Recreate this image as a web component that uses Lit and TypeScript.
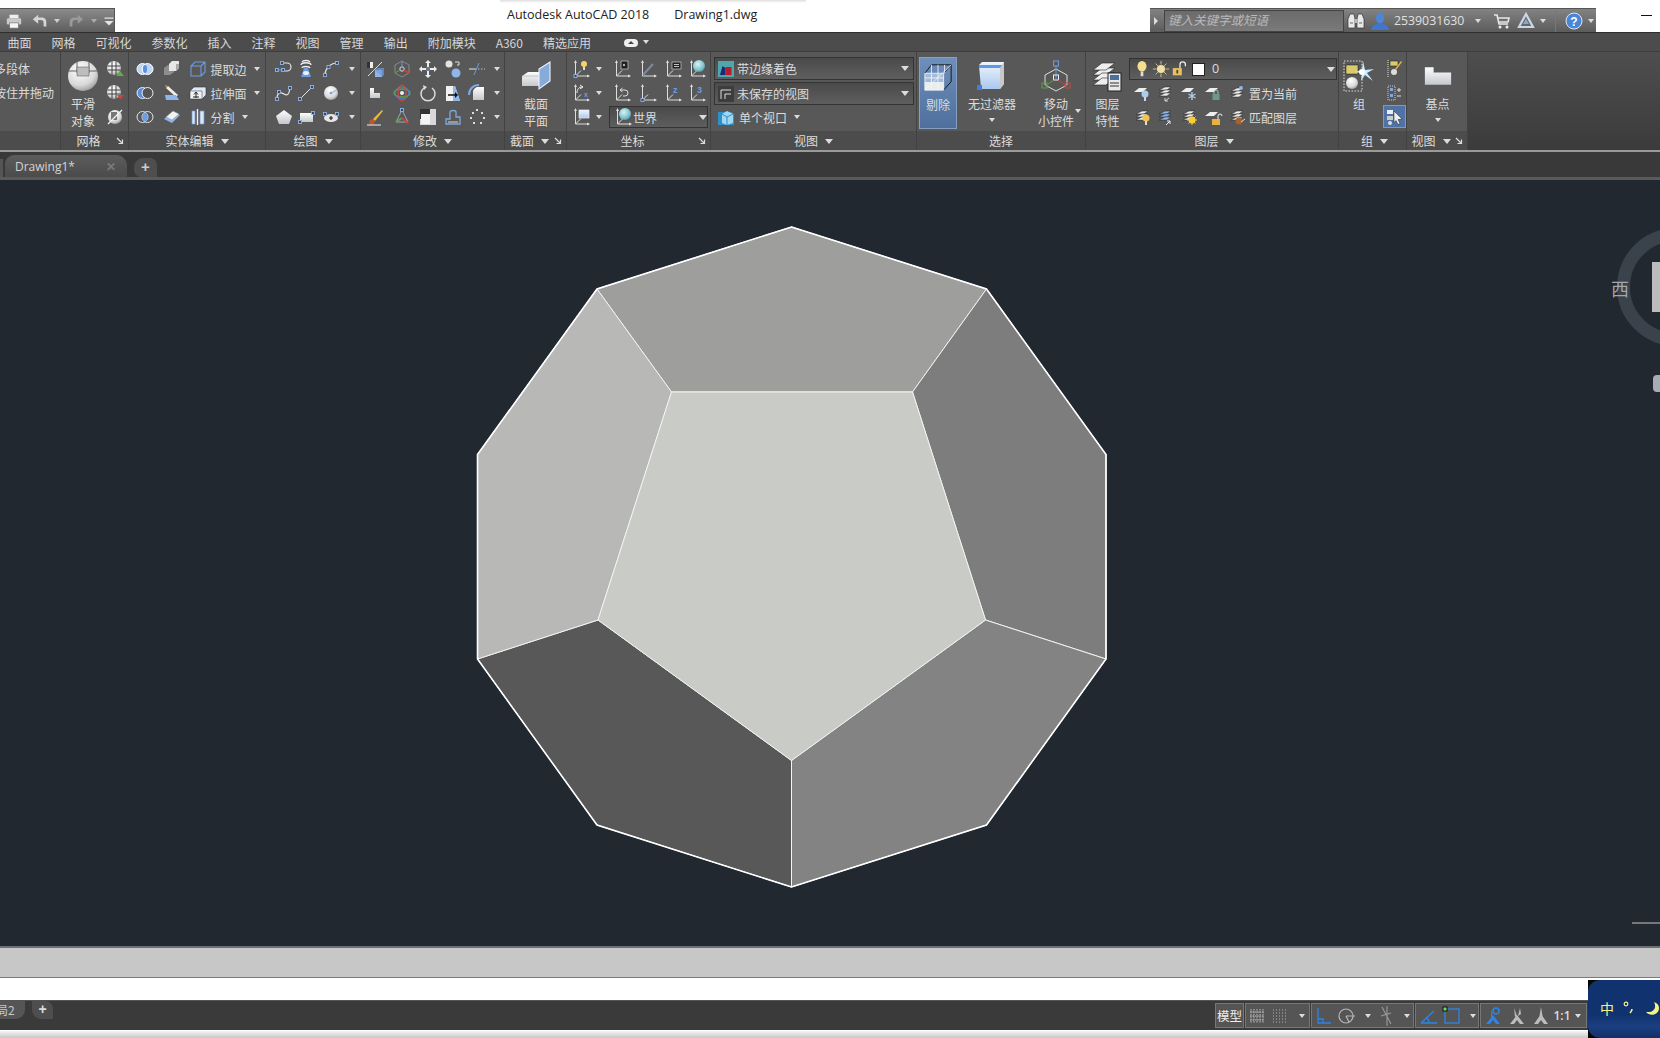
import { LitElement, html, css, svg, nothing } from "lit";
import { customElement } from "lit/decorators.js";

const WHITE = "#e6e6e6";
const BLUE = "#6c9be0";

const node = (x: number, y: number, c = "#8fb4e6") =>
  svg`<rect x=${x - 1.5} y=${y - 1.5} width="3" height="3" fill="#3f4650" stroke=${c} stroke-width=".9"/>`;

const ucs = (extra: unknown = nothing) => svg`
  <path d="M4.5 2v15H18M4.5 17l5.5-5.5" fill="none" stroke="#ddd"/>
  <path d="M3 4l1.5-3L6 4zM16 15.5l3 1.5-3 1.5z" fill="#ddd"/>${extra}`;

const meshBall = (extra: unknown = nothing) => svg`
  <circle cx="9" cy="9" r="7" fill="url(#ball)"/>
  <path d="M2.5 7h13M2.5 11h13M7 2.3v13.4M11 2.3v13.4" stroke="#333" stroke-width=".9"/>${extra}`;

const stack = (y = 0, c = "#eee") => svg`
  <path d=${`M4 ${y + 7}l6-3h6l-4 3z`} fill=${c} stroke="#222" stroke-width=".5"/>
  <path d=${`M4 ${y + 10}l6-3h6l-4 3z`} fill=${c} stroke="#222" stroke-width=".5"/>
  <path d=${`M4 ${y + 13}l6-3h6l-4 3z`} fill=${c} stroke="#222" stroke-width=".5"/>`;

const flatLayer = svg`<path d="M2 9l5-4h8l-4 4z" fill="#eee"/>`;

const ICONS: Record<string, unknown> = {
  printer: svg`<path d="M5 3h10v4H5z" fill="#eee"/><rect x="2" y="7" width="16" height="7" rx="1.5" fill="#c9c9c9"/><path d="M5 12h10v6H5z" fill="#f4f4f4" stroke="#555" stroke-width=".6"/>`,
  undo: svg`<path d="M2 8l6-5v3h4c4 0 5 3 5 5v5h-3v-4c0-2-1-3-3-3H8v4z" fill="#d5d5d5"/>`,
  redo: svg`<path d="M18 8l-6-5v3H8c-4 0-5 3-5 5v5h3v-4c0-2 1-3 3-3h3v4z" fill="#9a9a9a"/>`,
  qatmore: svg`<path d="M5 6h10v1.6H5zM5 10h10l-5 5z" fill="#e4e4e4"/>`,
  binoculars: svg`<path d="M2 8l2-5h4l1 5v9H2zM11 8l1-5h4l2 5v9h-7z" fill="#e8e8e8" stroke="#333" stroke-width=".7"/><path d="M9 8h2v4H9z" fill="#bbb"/><path d="M4 12h3M13 12h3" stroke="#666"/>`,
  user: svg`<ellipse cx="10" cy="7" rx="4" ry="5.5" fill="#4d86d8"/><path d="M1 19c1-5 4-6 9-6s8 1 9 6z" fill="#3e77cc"/>`,
  cart: svg`<path d="M2 4h3l2 9h9M6 7h11l-1 4H7" fill="none" stroke="#e6e6e6" stroke-width="1.6"/><circle cx="8" cy="16" r="1.5" fill="#eee"/><circle cx="15" cy="16" r="1.5" fill="#eee"/>`,
  a360: svg`<path d="M10 3l7 13H3z" fill="none" stroke="#c9d7ea" stroke-width="2.2"/><path d="M10 8l3 5H7z" fill="#8aa7cc"/>`,
  help: svg`<circle cx="10" cy="10" r="8" fill="#4a86d8" stroke="#dce8f7"/><text x="10" y="14.5" text-anchor="middle" font-family="Liberation Sans" font-weight="700" font-size="12" fill="#fff">?</text>`,
  view3d: svg`<rect x="1" y="5" width="14" height="8" rx="4" fill="#eee"/><path d="M5 10l3-3 3 3z" fill="#444"/>`,

  sphere: svg`<circle cx="16" cy="16" r="15" fill="url(#ball)"/><path d="M2 11h28M10 2v11M22 2v11" stroke="#555" stroke-width=".9"/><path d="M10 7h12v9H10z" fill="#bdbdbd" stroke="#666" stroke-width=".6"/>`,
  meshUp: svg`${meshBall()}<path d="M11 17l4-5 4 5z" fill="#5fae3f"/>`,
  meshDown: svg`${meshBall()}<path d="M12 12h7l-3.5 4.5z" fill="#c9463d"/>`,
  meshSlash: svg`<circle cx="10" cy="10" r="7" fill="url(#ball)"/><path d="M6 5h6v8H6z" fill="#777"/><path d="M3 17L17 3" stroke="#f2f2f2" stroke-width="1.3"/>`,

  union: svg`<circle cx="7.5" cy="10" r="5.5" fill="#bcd4f5" stroke="#fff"/><circle cx="12.5" cy="10" r="5.5" fill="#bcd4f5" stroke="#fff"/><ellipse cx="10" cy="10" rx="2" ry="4" fill="#5d8fd8"/>`,
  subtract: svg`<circle cx="7.5" cy="10" r="5.5" fill="#5d8fd8" stroke="#e8eef6"/><circle cx="12.5" cy="10" r="5.5" fill="#555" stroke="#e8eef6"/>`,
  intersect: svg`<circle cx="7.5" cy="10" r="5.5" fill="none" stroke="#dfe4ea"/><circle cx="12.5" cy="10" r="5.5" fill="none" stroke="#dfe4ea"/><ellipse cx="10" cy="10" rx="2.6" ry="4.6" fill="#6f9ee0"/>`,
  cubes: svg`<path d="M2 9l4-3h6v7l-4 3H2z" fill="#8d8d8d"/><path d="M7 5l3-3h7v7l-3 3H7z" fill="#e7e7e7"/><path d="M14 5h3v4l-3 3z" fill="#aaa"/>`,
  edgeCube: svg`<path d="M3 7h10v10H3zM3 7l4-4h10v10l-4 4M13 7l4-4" fill="none" stroke=${BLUE} stroke-width="1.1"/>`,
  pressPull: svg`<path d="M6 3l10 9-2 2L4 5z" fill="#eee"/><path d="M3 2l3 1-2 2z" fill="#d28a38"/><path d="M3 12h11l3 5H4z" fill="#8fb6ea"/>`,
  extrude: svg`<path d="M2 8l4-4h12v8l-4 4H2z" fill="#dfe9f5" stroke="#333" stroke-width=".6"/><path d="M2 8h12v8H2z" fill="#f2f2f2" stroke="#456" stroke-width=".6"/><path d="M8 15V10M6 11.5L8 9l2 2.5M5 14h6" stroke="#222" fill="none"/>`,
  shell: svg`<path d="M2 12l8-7 8 3-8 8z" fill="#8fb6ea"/><path d="M4 10l7-6 6 3-7 6z" fill="#f2f2f2" stroke="#888" stroke-width=".5"/>`,
  slice: svg`<path d="M4 4h3v13H4zM12 4h4v13h-4z" fill="#dbe6f4" stroke="#6c9be0" stroke-width=".7"/><path d="M9.5 2v16" stroke="#f2f2f2" stroke-width="1.4"/>`,

  pline: svg`${node(3, 11)}${node(9, 11)}<path d="M3 11h6" stroke=${BLUE}/><path d="M9 4h4a4 4 0 0 1 0 8h-2" fill="none" stroke=${WHITE} stroke-width="1.2"/>${node(8, 4)}`,
  helix: svg`<path d="M5 18l3-9h4l3 9z" fill="#6c9be0"/><ellipse cx="10" cy="14" rx="3" ry="2" fill="#e8f0fb"/><path d="M6 9c0-2 7-2 8 0M5 6c0-3 10-3 10 0M6 3c1-2 7-2 8 0" fill="none" stroke="#eee" stroke-width="1.3"/>`,
  arc3: svg`<path d="M4 16C4 10 9 4 16 4" fill="none" stroke=${WHITE} stroke-width="1.2"/>${node(4, 16)}${node(7.5, 8)}${node(16, 4)}`,
  spline: svg`<path d="M3 16c0-7 4-7 7-5s5 1 6-6" fill="none" stroke=${WHITE} stroke-width="1.2"/>${node(3, 16)}${node(16, 5)}${node(5, 9)}`,
  line: svg`<path d="M4 16L16 4" stroke=${WHITE}/>${node(4, 16)}${node(16, 4)}`,
  circle: svg`<circle cx="10" cy="10" r="7" fill="url(#ball)"/><circle cx="10" cy="10" r="1.3" fill="#6c9be0"/><path d="M10 10l6-3" stroke="#8fb4e6"/>`,
  pentagon: svg`<path d="M10 3l8 6-3 8H5L2 9z" fill="url(#whitegrad)"/>`,
  rect: svg`<path d="M4 6h13v9H4z" fill="url(#whitegrad)"/>${node(4, 15)}${node(17, 6)}`,
  teapot: svg`<ellipse cx="10" cy="11" rx="7" ry="4" fill=${WHITE}/><path d="M8 11h4M10 9v4" stroke="#222" stroke-width="1.2"/>${node(4, 7)}${node(16, 7)}`,

  scale: svg`<path d="M3 17L17 3" stroke="#ddd"/><path d="M2 3h6v6H2z" fill="#eee"/><path d="M2 3h3v6H2z" fill="#333"/><path d="M10 11h7v7h-7z" fill="#8fb6ea"/><path d="M10 11l2-2h7v7l-2 2z" fill="#6c9be0" opacity=".7"/>`,
  move3d: svg`<path d="M10 2l7 4v8l-7 4-7-4V6z" fill="none" stroke="#8a8a8a"/><circle cx="10" cy="10" r="2.2" fill="none" stroke="#ddd"/><path d="M10 2v6" stroke=${BLUE}/><path d="M3 14l5-3" stroke="#5d9f48"/><path d="M17 14l-5-3" stroke="#c9463d" stroke-width="1.6"/>`,
  move: svg`<path d="M10 1l3 3h-2v5h5V7l3 3-3 3v-2h-5v5h2l-3 3-3-3h2v-5H4v2l-3-3 3-3v2h5V4H7z" fill="#eee"/><rect x="8" y="8" width="4" height="4" fill="#6c7a8c"/>`,
  copy: svg`<circle cx="6" cy="5" r="3.5" fill="#e3e3e3"/><circle cx="13" cy="14" r="4.5" fill="#8fb6ea"/><path d="M12 3h4v3M14 6l2 0" stroke="#ddd" fill="none"/>`,
  trim: svg`<path d="M2 10h7" stroke=${WHITE}/><path d="M11 10h7" stroke="#bbb" stroke-dasharray="1.5 1.5"/><path d="M7 16L12 4" stroke=${BLUE}/>`,
  ell: svg`<path d="M5 5h4v5h6v5H5z" fill="url(#whitegrad)"/>`,
  rotate3d: svg`<ellipse cx="10" cy="10" rx="8" ry="4" fill="none" stroke="#5d9f48" stroke-width="1.4"/><ellipse cx="10" cy="10" rx="4" ry="8" fill="none" stroke="#c9463d" stroke-width="1.4"/><ellipse cx="10" cy="10" rx="7" ry="6" fill="none" stroke="#4d86d8"/><circle cx="10" cy="10" r="2" fill="#eee"/>`,
  rotate: svg`<path d="M6 5a7 7 0 1 0 8 0" fill="none" stroke="#ddd" stroke-width="1.5"/><path d="M5 2l4 2-3 3z" fill="#ddd"/>`,
  stretch: svg`<path d="M3 3h9l5 15H3z" fill="#f1f1f1"/><path d="M12 3l5 15h-7V3z" fill="#8fb6ea"/><path d="M5 12h8" stroke="#111" stroke-width="1.5"/><path d="M12 9l3 3-3 3z" fill="#111"/>`,
  fillet: svg`<path d="M6 17V9c0-3 3-5 5-5h6v13z" fill="url(#whitegrad)"/><path d="M2 12c0-6 4-10 10-10" fill="none" stroke="#7fa8de" stroke-width="2"/>`,
  brush: svg`<path d="M8 12L17 3l1 1-8 10z" fill="#eab93b"/><path d="M5 13l3-1 2 2-1 3-5 1z" fill="#c1552d"/><path d="M2 18h14" stroke="#eee"/>`,
  triad: svg`<path d="M10 3L4 15h12z" fill="none" stroke="#99a9bf"/><path d="M4 15l6-4" stroke="#5d9f48" stroke-width="2"/><path d="M16 16l-6-5" stroke="#c9463d" stroke-width="2"/>${node(10, 3)}`,
  offset: svg`<path d="M2 2h16v16H2z" fill="#d9d9d9"/><path d="M2 2h10v10H2z" fill="#333"/><path d="M3 7h9v10H3z" fill="#f4f4f4"/>`,
  boundary: svg`<path d="M3 17v-5h4V5c0-2 6-2 6 0v5h4v7z" fill="none" stroke="#7fa8de" stroke-width="1.3"/><path d="M5 15h10" stroke="#ddd"/>`,
  array: svg`<g fill="#ddd"><rect x="9" y="2" width="2" height="2"/><rect x="14" y="5" width="2" height="2"/><rect x="16" y="10" width="2" height="2"/><rect x="13" y="15" width="2" height="2"/><rect x="6" y="15" width="2" height="2"/><rect x="3" y="10" width="2" height="2"/><rect x="5" y="5" width="2" height="2"/></g>`,

  section: svg`<path d="M1 15l6-4h14l-2 4v10H1z" fill="url(#whitegrad)"/><path d="M1 15h18v10" fill="none" stroke="#999" stroke-width=".5"/><path d="M18 8l11-7v19l-11 8z" fill="#87abd9" stroke="#eef" stroke-width="1.1"/>`,

  ucsLamp: svg`${ucs()}<circle cx="13" cy="5" r="3" fill="#f5d36a"/><rect x="12" y="8" width="2" height="3" fill="#ddd"/>${node(4.5, 17)}`,
  ucsDoc: svg`${ucs()}<rect x="9" y="2" width="7" height="8" fill="#222" stroke="#ccc" stroke-width=".7"/><path d="M11 5l2 2m0-2l-2 2" stroke="#eee" stroke-width=".7"/>`,
  ucsPlain: svg`<path d="M4.5 2v15H18" fill="none" stroke="#ddd"/><path d="M3 4l1.5-3L6 4zM16 15.5l3 1.5-3 1.5z" fill="#ddd"/><path d="M5 16L15 5" stroke="#7b8aa0" stroke-width="2"/>`,
  ucsList: svg`${ucs()}<rect x="9" y="3" width="9" height="7" fill="#222" stroke="#ccc" stroke-width=".7"/><path d="M11 5.5h5M11 7.5h5" stroke="#eee" stroke-width=".8"/>`,
  ucsGlobe: svg`${ucs()}<circle cx="12" cy="7" r="6" fill="url(#globe)"/>`,
  ucsX: svg`${ucs()}<path d="M6 10c0-4 2-6 5-6M9 2l3 2-3 2" fill="none" stroke="#eee"/><text x="13" y="14" font-size="7" font-weight="700" font-family="Liberation Sans" fill=${BLUE}>x</text>`,
  ucsUndo: svg`${ucs()}<path d="M8 7h5a3 3 0 0 1 0 6h-2M8 7l2.5-2M8 7l2.5 2" fill="none" stroke="#ddd"/>`,
  ucsNode: svg`${ucs()}${node(4.5, 17)}`,
  ucsZ: svg`${ucs()}<text x="10" y="10" font-size="9" font-weight="700" font-family="Liberation Sans" fill=${BLUE}>z</text>`,
  ucs3: svg`${ucs()}<text x="10" y="10" font-size="9" font-weight="700" font-family="Liberation Sans" fill=${BLUE}>3</text>`,
  ucsFace: svg`${ucs()}<rect x="8" y="3" width="10" height="8" fill="url(#bluegrad)" stroke="#eee" stroke-width=".7"/>`,

  shade: svg`<rect x="0" y="0" width="16" height="16" fill="#4ea7ab"/><path d="M2 14l2.5-9 3 2v7z" fill="#162b77"/><path d="M7.5 6h6v8H8z" fill="#b81c2a"/>`,
  viewDark: svg`<rect x="0" y="0" width="16" height="16" fill="#3d3d3d"/><path d="M3 13V4h10M7 13V8h6" fill="none" stroke="#ddd"/>`,
  viewport: svg`<path d="M1 4h13l3 2v11H1z" fill="#2f8fc8"/><path d="M5 6l5-3 6 3v9l-6 2-5-2z" fill="#9fd8f2"/><path d="M10 9v8M5 6l5 3 6-3" stroke="#2f8fc8" fill="none"/>`,

  hide: svg`<path d="M2 12h20v18H2z" fill="#cfdff2" opacity=".6"/><path d="M2 22h20v8H2z" fill="#ececec"/><path d="M2 12l7-9h21v18l-8 9M22 12l8-9" fill="none" stroke="#111"/><path d="M2 12h20v18H2zM9 12v18M16 12v18M2 17h20M2 22h20M2 30L30 3M9 3v9M16 3v9M23 3v9" fill="none" stroke="#f2f6fb" stroke-width=".9"/>`,
  filterCube: svg`<path d="M3 5l3-3h22v22l-4 5H5z" fill="url(#bluegrad)"/><path d="M3 5h23v3H3z" fill="#5a9be8"/><path d="M24 8l4-6v22l-4 5z" fill="#c8c8c8"/><rect x="1" y="25" width="5" height="5" fill="#3f7fe0"/>`,
  gizmo: svg`<path d="M16 9l11 6v10l-11 6-11-6V15z" fill="none" stroke="#ddd"/><path d="M16 5v14" stroke=${BLUE}/><rect x="13.5" y="1" width="5" height="5" fill="none" stroke=${BLUE}/><rect x="13.5" y="15" width="5" height="5" fill="none" stroke="#eee"/><path d="M5 26l9-6" stroke="#5d9f48"/><rect x="2" y="23" width="5" height="5" fill="none" stroke="#5d9f48"/><path d="M27 26l-9-6" stroke="#c9463d"/><rect x="25" y="23" width="5" height="5" fill="none" stroke="#c9463d"/>`,
  layerProps: svg`<path d="M1 15L10 8h13l-9 7z" fill="#eee" stroke="#222" stroke-width=".6"/><path d="M1 20l9-7h13l-9 7z" fill="#eee" stroke="#222" stroke-width=".6"/><path d="M1 25l9-7h13l-9 7z" fill="#eee" stroke="#222" stroke-width=".6"/><path d="M1 10L10 3h13l-9 7z" fill="#eee" stroke="#222" stroke-width=".6"/><rect x="16" y="13" width="13" height="18" fill="#e8e8e8" stroke="#222"/><path d="M18 15h9v5h-9z" fill="#4d6f9e"/><path d="M18 23h9M18 26h9" stroke="#333"/>`,
  group: svg`<rect x="1" y="1" width="18" height="30" fill="none" stroke="#ddd" stroke-dasharray="1.5 1.5"/><rect x="3" y="5" width="12" height="9" fill="#dccb6b" stroke="#111" stroke-width=".5"/><circle cx="9" cy="23" r="6" fill="url(#ball)"/><path d="M20 1l2 9 9-1-7 4 6 8-8-6-4 6 1-8-7-1 7-2z" fill="#c5ecff"/><circle cx="19" cy="12" r="3" fill="#fff"/>`,
  baseShape: svg`<path d="M1 6h10v6h20v14H1z" fill="url(#whitegrad)"/>`,

  groupEdit: svg`<path d="M6 2h8v5H6z" fill="#dccb6b" stroke="#111" stroke-width=".5"/><circle cx="10" cy="13" r="3" fill="#ddd"/><path d="M4 1v17" stroke="#ddd" stroke-dasharray="1 1"/><path d="M11 10l6-8 1 1-6 8z" fill="#eab93b"/>`,
  groupAdd: svg`<rect x="4" y="3" width="7" height="14" fill="none" stroke="#ccc" stroke-dasharray="1 1"/><rect x="6" y="5" width="3" height="3" fill="#7fa8de"/><rect x="6" y="11" width="3" height="3" fill="#7fa8de"/><path d="M13 7h4M15 5v4M13 13h4" stroke="#ddd"/>`,
  groupPick: svg`<rect x="3" y="3" width="6" height="4" fill="#eee"/><rect x="3" y="9" width="6" height="4" fill="#ccc"/><circle cx="6" cy="16" r="2" fill="#ddd"/><path d="M10 4l8 8-4 .6 2 4-2 1-2-4-2 2z" fill="#eee" stroke="#222" stroke-width=".5"/>`,

  bulb: svg`<ellipse cx="10" cy="7" rx="5" ry="6" fill="#f5e08e"/><rect x="8.5" y="13" width="3" height="5" fill="#ddd"/>`,
  sun: svg`<circle cx="10" cy="10" r="4.5" fill="#f1dfa5"/><path d="M10 1v4M10 15v4M1 10h4M15 10h4M4 4l2.5 2.5M13.5 13.5L16 16M16 4l-2.5 2.5M6.5 13.5L4 16" stroke="#d8c999"/>`,
  lockOpen: svg`<rect x="2" y="9" width="10" height="8" fill="#e9c25e"/><rect x="6" y="11" width="2" height="4" fill="#444"/><path d="M10 9V5a3 3 0 0 1 6 0v2" fill="none" stroke="#eee" stroke-width="1.4"/>`,

  layOff: svg`${flatLayer}<circle cx="13" cy="11" r="3.5" fill="#a9cdea"/><rect x="12" y="14" width="2" height="4" fill="#dce"/>`,
  layIso: svg`${stack()}<path d="M14 15l-4 3M10 15v3h3" stroke="#ddd" fill="none" stroke-width=".9"/>`,
  layFreeze: svg`${flatLayer}<path d="M13 9v8M9.5 11l7 4M16.5 11l-7 4" stroke="#a9cdea" stroke-width="1.4"/>`,
  layLock: svg`${flatLayer}<rect x="9.5" y="11" width="7" height="6" fill="#6c9a86"/><path d="M11 11V9a2 2 0 0 1 4 0v2" fill="none" stroke="#9fc4b2"/>`,
  layCur: svg`${stack(1)}<circle cx="14" cy="5" r="2" fill="#8fb6ea"/>`,
  layOn: svg`${stack()}<circle cx="14" cy="11" r="3.5" fill="#f5c24a"/><rect x="13" y="14" width="2" height="4" fill="#ddd"/>`,
  layUniso: svg`${stack(0, "#8fb6ea")}<path d="M11 18l4-4M12 14h3v3" stroke="#eee" fill="none"/>`,
  layThaw: svg`${stack()}<circle cx="13" cy="13" r="3.5" fill="#f5cd3f"/><path d="M13 8v10M8 13h10M9.5 9.5l7 7M16.5 9.5l-7 7" stroke="#f5cd3f"/>`,
  layUnlock: svg`${flatLayer}<rect x="9" y="12" width="8" height="6" fill="#e9b23e"/><path d="M15 12V9a2 2 0 0 1 4 0" fill="none" stroke="#eee"/>`,
  layMatch: svg`${stack()}<circle cx="12" cy="14" r="3.5" fill="#a8602c"/><path d="M14 15l4-3" stroke="#ddd"/>`,

  stGrid: svg`<path d="M3 3v14M6 3v14M9 3v14M12 3v14M15 3v14M2 6h14M2 10h14M2 14h14" stroke="#b8b8b8" stroke-dasharray="1.6 .8"/>`,
  stSnap: svg`<path d="M2 4h15M2 7h15M2 10h15M2 13h15M2 16h15" stroke="#b0b0b0" stroke-dasharray="1 2"/>`,
  stOrtho: svg`<path d="M4 2v15h13M4 13h5v4" fill="none" stroke="#2e84e6" stroke-width="1.3"/>`,
  stPolar: svg`<circle cx="9" cy="10" r="7" fill="none" stroke="#b8b8b8" stroke-width="1.2"/><path d="M9 10h9M9 10l3 6" stroke="#b8b8b8" stroke-width="1.2"/>`,
  stIso: svg`<path d="M14 18L5 1M10 0v20M4 10l10-3" stroke="#9a9a9a" stroke-width="1.1"/>`,
  stAngle: svg`<path d="M2 17h16M2 17L15 5M10 17c0-3-1-4-2-5" fill="none" stroke="#2e84e6" stroke-width="1.4"/>`,
  stBox: svg`<rect x="3" y="3" width="14" height="14" fill="none" stroke="#2e84e6" stroke-width="1.3"/><rect x="1" y="1" width="4" height="4" fill="#6ee06a" stroke="#111"/>`,
  stAnnoBlue: svg`<path d="M10 9L3 18h4l3-4 3 4h4z" fill="#2e84e6"/><path d="M8 3L10 11l-2 1z" fill="#2e84e6"/><circle cx="13" cy="5" r="3" fill="none" stroke="#2e84e6" stroke-width="1.5"/>`,
  stAnnoGrey: svg`<path d="M10 9L3 18h4l3-4 3 4h4z" fill="#bdbdbd"/><path d="M7 2l3 8-2 1zM13 2l-2 8 3-2z" fill="#bdbdbd"/>`,
  stAnno: svg`<path d="M10 8L3 18h4l3-4 3 4h4z" fill="#bdbdbd"/><path d="M10 1l1.5 9h-3z" fill="#bdbdbd"/>`,
};

function ic(name: string, size = 20, box = 20) {
  return html`<svg class="ic" width=${size} height=${size} viewBox="0 0 ${box} ${box}">${ICONS[name]}</svg>`;
}

// grid columns from the icon centres read off the screen, tracks end half a gap past the last centre
function tracks(panelX: number, centers: number[], tail = "") {
  const mids = centers.slice(1).map((c, i) => (c + centers[i]) / 2);
  const start = centers[0] - (mids[0] - centers[0]);
  const end = centers[centers.length - 1] + (centers[centers.length - 1] - mids[mids.length - 1]);
  const edges = [start, ...mids, end];
  const cols = edges.slice(1).map((e, i) => `${e - edges[i]}px`).join(" ");
  return `padding-left:${start - panelX}px;grid-template-columns:${cols} ${tail}`;
}

type Row = string[];

function cell(c: string) {
  if (c === "^") return html`<i class="caret"></i>`;
  if (c.startsWith("t:")) return html`<span class="lbl">${c.slice(2)}<i class="caret"></i></span>`;
  if (c.startsWith("p:")) return html`<span class="lbl">${c.slice(2)}</span>`;
  return ic(c);
}

function grid(panelX: number, centers: number[], rows: Row[], tail = "") {
  return html`<div class="grid" style=${tracks(panelX, centers, tail)}>${rows.map((r) => r.map(cell))}</div>`;
}

const launcher = html`<svg class="launch" width="8" height="8" viewBox="0 0 8 8"><path d="M1 1l5 5M6.5 2.5v4h-4" fill="none" stroke="#ddd" stroke-width="1.2"/></svg>`;

function title(text: string, caret = true, launch = false, nudge = false) {
  return html`<div class="title ${launch || nudge ? "nudge" : ""}"><span class="tt">${text}${caret ? html`<i class="caret wide"></i>` : nothing}</span>${launch ? launcher : nothing}</div>`;
}

const TABS = ["曲面", "网格", "可视化", "参数化", "插入", "注释", "视图", "管理", "输出", "附加模块", "A360", "精选应用"];

@customElement("app-root")
export class AppRoot extends LitElement {
  static styles = css`
    :host {
      display: flex;
      flex-direction: column;
      width: 1660px;
      height: 1038px;
      overflow: hidden;
      position: relative;
      background: #fff;
      font-family: "Noto Sans CJK SC", "Liberation Sans", sans-serif;
      font-size: 12px;
      color: #dcdcdc;
    }
    .ic { display: block; flex: none; }
    .defs { width: 0; height: 0; position: absolute; }
    .caret {
      display: inline-block;
      width: 0;
      height: 0;
      border-left: 3px solid transparent;
      border-right: 3px solid transparent;
      border-top: 4px solid #dcdcdc;
      flex: none;
    }
    .caret.wide { border-left-width: 4px; border-right-width: 4px; border-top-width: 5px; margin-left: 7px; vertical-align: 2px; }

    .topbar { height: 32px; display: flex; align-items: flex-end; background: #fff; position: relative; flex: none; }
    .topbar::before {
      content: "";
      position: absolute;
      left: 500px;
      top: 0;
      width: 306px;
      height: 3px;
      background: linear-gradient(#dedede, #fff);
    }
    .qat {
      width: 115px;
      height: 24px;
      box-sizing: border-box;
      border: 1px solid #555;
      border-bottom: 0;
      border-left: 0;
      background: linear-gradient(#8a8a8a, #5e5e5e);
      display: flex;
      align-items: center;
      padding-left: 5px;
      flex: none;
    }
    .qat .ic { width: 18px; height: 18px; }
    .qat .spacer { width: 8px; flex: none; }
    .qat .caret { margin: 0 7px 0 5px; border-top-color: #cfcfcf; }
    .qat .caret.dim { border-top-color: #aaa; margin: 0 3px 0 6px; }
    .doc-title {
      margin-left: 392px;
      align-self: flex-start;
      margin-top: 6px;
      line-height: 18px;
      font-family: "Open Sans", "Noto Sans CJK SC", sans-serif;
      font-size: 12.5px;
      color: #222;
      display: flex;
      gap: 25px;
      width: 643px;
      flex: none;
      white-space: nowrap;
    }
    .cluster {
      width: 446px;
      height: 24px;
      flex: none;
      box-sizing: border-box;
      border-top: 1px solid #555;
      background: linear-gradient(#828282, #5c5c5c);
      display: flex;
      align-items: center;
    }
    .cluster .tri {
      width: 0;
      height: 0;
      margin-left: 4px;
      border-top: 4px solid transparent;
      border-bottom: 4px solid transparent;
      border-left: 4px solid #ddd;
    }
    .search {
      margin-left: 6px;
      width: 180px;
      height: 22px;
      box-sizing: border-box;
      border: 1px solid #444;
      background: linear-gradient(#6b6b6b, #7a7a7a);
      color: #b9b9b9;
      font-style: italic;
      font-size: 12.5px;
      line-height: 17px;
      padding-left: 3px;
    }
    .cluster .bino { margin-left: 2px; }
    .cluster .usr { margin-left: 4px; }
    .cluster .num {
      margin-left: 4px;
      width: 81px;
      font-family: "Open Sans", sans-serif;
      font-size: 12.3px;
      color: #e0e0e0;
    }
    .cluster .cart { margin-left: 11px; }
    .cluster .tri360 { margin-left: 4px; }
    .cluster .sep { width: 1px; height: 22px; background: #777; margin: 0 8px 0 9px; }
    .cluster .sm { margin-left: 4px; }
    .close { margin-left: 45px; width: 11px; height: 1px; background: #111; align-self: flex-start; margin-top: 15px; flex: none; }

    .tabs {
      height: 20px;
      box-sizing: border-box;
      flex: none;
      border-top: 1px solid #2e2e2e;
      border-bottom: 1px solid #3d3d3d;
      background: #4c4c4c;
      display: flex;
      align-items: center;
      gap: 20px;
      padding-left: 7.5px;
      color: #d6d6d6;
      white-space: nowrap;
    }
    .tabs .switch { display: flex; align-items: center; gap: 4px; margin-left: 12px; }

    .ribbon {
      height: 100px;
      flex: none;
      box-sizing: border-box;
      display: flex;
      background: linear-gradient(#4e4e4e, #3b3b3b);
      border-bottom: 2px solid #9a9a9a;
    }
    .panel {
      flex: none;
      display: flex;
      flex-direction: column;
      overflow: hidden;
      box-sizing: border-box;
      border-right: 1px solid #424242;
      background: #585858;
    }
    .body { height: 79px; box-sizing: border-box; padding-top: 5px; display: flex; }
    .title {
      height: 19px;
      display: flex;
      align-items: center;
      background: #4c4c4c;
      line-height: 19px;
      color: #dcdcdc;
    }
    .title.nudge .tt { padding-left: 4px; }
    .tt { flex: 1; text-align: center; white-space: nowrap; }
    .launch { flex: none; margin: 0 4px 0 4px; }

    .grid { display: grid; grid-auto-rows: 24px; align-items: center; justify-items: center; }
    .lbl { justify-self: start; white-space: nowrap; display: flex; align-items: center; gap: 7px; }

    .large { flex: none; display: flex; flex-direction: column; align-items: center; text-align: center; line-height: 17px; position: relative; white-space: nowrap; }
    .large .pic { height: 38px; display: flex; align-items: center; justify-content: center; }
    .w-mesh { width: 44px; }
    .w-sec { width: 62px; }
    .w-hide { width: 38px; height: 72px; margin-left: 2px; box-sizing: border-box; border: 1px solid #86a0c4; background: linear-gradient(#6e8fbb, #4f6f9c); }
    .w-filter { width: 70px; }
    .w-gizmo { width: 58px; }
    .w-layer { width: 43px; }
    .w-group { width: 38px; margin-left: 1px; }
    .w-base { width: 61px; }
    .large .under { margin-top: 6px; }
    .large .gizmo-more { position: absolute; right: 4px; top: 52px; }

    .clip { display: flex; flex-direction: column; margin-left: -6px; line-height: 24px; white-space: nowrap; }

    .combo {
      box-sizing: border-box;
      height: 23px;
      border: 1px solid #333;
      background: linear-gradient(#4a4a4a, #5e5e5e);
      display: flex;
      align-items: center;
      white-space: nowrap;
    }
    .combo > span { margin-top: -1px; }
    .combo .caret { margin-left: auto; border-left-width: 4px; border-right-width: 4px; border-top-width: 5px; margin-right: 4px; }
    .combo.world { grid-column: 3 / -1; justify-self: start; width: 99px; height: 22px; }
    .combo.world > span { margin-top: 0; }
    .combo.world .ic { margin-left: 3px; }
    .combo.world .caret { margin-right: 0; }
    .view-col { display: flex; flex-direction: column; gap: 2px; padding-left: 3px; width: 200px; }
    .view-col .combo { padding-left: 3px; gap: 3px; }
    .view-row { display: flex; align-items: center; height: 20px; padding-left: 3px; gap: 4px; }
    .view-row .caret { margin-left: 3px; }

    .layer-col { display: flex; flex-direction: column; }
    .combo.layer { width: 208px; height: 22px; margin: 1px 0 1px; }
    .combo.layer .zero { margin-left: 7px; font-family: "Open Sans", sans-serif; font-size: 12.5px; }
    .combo.layer .caret { margin-right: 1px; }
    .swatch { width: 13px; height: 13px; background: #fff; border: 1px solid #222; box-sizing: border-box; }
    .combo.layer .ic { width: 18px; height: 18px; }
    .combo.layer .bulb { margin-left: 3px; margin-top: 0; }
    .combo.layer .gap { margin-left: 1px; margin-top: 0; }
    .combo.layer .swatch { margin-left: 3px; margin-top: 0; }

    .group-col { display: flex; flex-direction: column; align-items: center; width: 24px; margin-left: 4px; }
    .group-col .slot { height: 24px; width: 23px; display: flex; align-items: center; justify-content: center; box-sizing: border-box; }
    .group-col .slot.on { background: #4f73a6; border: 1px solid #7c9ac6; height: 23px; }

    .filetabs {
      height: 25px;
      flex: none;
      background: #393939;
      display: flex;
      align-items: flex-end;
      position: relative;
      padding-left: 5px;
    }
    .filetabs .shard { position: absolute; left: 0; bottom: 0; width: 3px; height: 18px; background: #555; }
    .ftab {
      width: 122px;
      height: 22px;
      box-sizing: border-box;
      padding: 0 11px 0 10px;
      border-radius: 9px 11px 0 0;
      background: linear-gradient(#5c5c5c, #4b4b4b);
      display: flex;
      align-items: center;
      justify-content: space-between;
      font-family: "Open Sans", sans-serif;
      font-size: 12px;
      color: #d4d4d4;
    }
    .ftab .x { color: #7a7a7a; font-size: 12px; font-weight: 700; }
    .fplus {
      margin-left: 7px;
      width: 23px;
      height: 19px;
      border-radius: 9px 7px 0 7px;
      background: #4e4e4e;
      color: #ccc;
      font: 700 15px/18px "Liberation Sans", sans-serif;
      text-align: center;
    }
    .strip { height: 3px; flex: none; background: #5a5a5a; }

    .canvas { height: 766px; flex: none; position: relative; background: #212830; overflow: hidden; }
    .canvas > svg.scene { display: block; }
    .cube-west { position: absolute; left: 1611px; top: 96px; font-size: 18px; line-height: 24px; color: #a3a6aa; }
    .wcs { position: absolute; left: 1653px; top: 195px; width: 12px; height: 17px; border-radius: 4px; background: #a9acb2; }

    .cmd-edge { height: 2px; flex: none; background: #6b6f74; }
    .cmd { height: 30px; flex: none; box-sizing: border-box; background: #c8c7c8; border-bottom: 1px solid #7b7b7b; }
    .cmd-white { height: 22px; flex: none; background: #fff; }

    .status {
      height: 30px;
      flex: none;
      background: #3a3a3a;
      border-top: 1px solid #555;
      box-sizing: border-box;
      display: flex;
      position: relative;
      justify-content: flex-end;
      padding: 2px 73px 2px 0;
      gap: 1px;
    }
    .ltab {
      position: absolute;
      left: 0;
      top: 0;
      width: 25px;
      height: 18px;
      overflow: hidden;
      background: #555;
      border-radius: 0 0 9px 0;
      font-size: 12px;
      line-height: 18px;
      color: #c8c8c8;
    }
    .ltab span { display: block; margin-left: -16px; white-space: nowrap; }
    .lplus {
      position: absolute;
      left: 32px;
      top: 0;
      width: 21px;
      height: 18px;
      background: #4e4e4e;
      border-radius: 0 8px 0 9px;
      color: #ddd;
      font: 700 14px/17px "Liberation Sans", sans-serif;
      text-align: center;
    }
    .sgroup {
      box-sizing: border-box;
      height: 25px;
      border: 1px solid #777;
      background: #555;
      display: grid;
      align-items: center;
      justify-items: center;
    }
    .sgroup .ic { width: 20px; height: 20px; }
    .sgroup .txt { font-size: 12.5px; color: #eee; white-space: nowrap; }
    .sgroup .scale { font-family: "Open Sans", sans-serif; font-size: 12px; color: #ddd; font-weight: 600; }
    .model { width: 29px; }
    .foot { flex: 1; background: linear-gradient(#f4f4f4, #c8c8c8); border-top: 1px solid #fff; }

    .ime {
      position: absolute;
      left: 1588px;
      top: 980px;
      width: 72px;
      height: 58px;
      background: #050505;
    }
    .ime-in {
      height: 100%;
      box-sizing: border-box;
      border-radius: 12px 0 0 12px;
      background: linear-gradient(#10336f 60%, #1b3f82 80%, #142f66);
      display: flex;
      align-items: flex-start;
      padding: 17px 0 0 12px;
      gap: 7px;
      color: #f4f48a;
      font-size: 14px;
      line-height: 22px;
    }
    .ime-in .ic { width: 16px; height: 16px; margin-top: 3px; }
  `;

  private scene() {
    const A = "791.5,227", B = "986.5,289", C = "1106,454.5", D = "1106,659", E = "986.5,825";
    const F = "791.5,887", G = "597,825", H = "477.5,659", I = "477.5,454.5", J = "597,289";
    const P = "671.5,392", Q = "912.5,392", R = "985.5,620", S = "791.5,760.5", T = "598,620";
    const faces: [string, string][] = [
      [`${J} ${A} ${B} ${Q} ${P}`, "#9e9e9d"],
      [`${B} ${C} ${D} ${R} ${Q}`, "#7d7d7d"],
      [`${R} ${D} ${E} ${F} ${S}`, "#838383"],
      [`${T} ${S} ${F} ${G} ${H}`, "#585858"],
      [`${J} ${P} ${T} ${H} ${I}`, "#b8b9b6"],
      [`${P} ${Q} ${R} ${S} ${T}`, "#c9cbc7"],
    ];
    return html`<svg class="scene" width="1660" height="766" viewBox="0 180 1660 766">
      ${faces.map(([pts, fill]) => svg`<polygon points=${pts} fill=${fill} stroke="#f4f4f4" stroke-width="1"/>`)}
      <polygon points="${A} ${B} ${C} ${D} ${E} ${F} ${G} ${H} ${I} ${J}" fill="none" stroke="#fff" stroke-width="1.6"/>
      <circle cx="1676" cy="287" r="52.5" fill="none" stroke="#3a424c" stroke-width="13"/>
      <rect x="1652" y="262" width="20" height="50" fill="#bcbcbc"/>
      <path d="M1632 923h28" stroke="#c8c8c8"/>
    </svg>`;
  }

  private ribbon() {
    return html`<div class="ribbon">
      <div class="panel" style="width:61px">
        <div class="body"><div class="clip"><span>多段体</span><span>按住并拖动</span></div></div>
        ${title("", false)}
      </div>

      <div class="panel" style="width:68px">
        <div class="body">
          <div class="large w-mesh"><div class="pic">${ic("sphere", 32, 32)}</div><span>平滑<br />对象</span></div>
          ${grid(105, [115, 135], [["meshUp", "p:"], ["meshDown", "p:"], ["meshSlash", "p:"]])}
        </div>
        ${title("网格", false, true)}
      </div>

      <div class="panel" style="width:137px">
        <div class="body">
          ${grid(129, [145, 173, 198], [
            ["union", "cubes", "edgeCube", "t:提取边"],
            ["subtract", "pressPull", "extrude", "t:拉伸面"],
            ["intersect", "shell", "slice", "t:分割"],
          ], "1fr")}
        </div>
        ${title("实体编辑")}
      </div>

      <div class="panel" style="width:95px">
        <div class="body">
          ${grid(266, [284, 304, 333, 352], [
            ["pline", "helix", "arc3", "^"],
            ["spline", "line", "circle", "^"],
            ["pentagon", "rect", "teapot", "^"],
          ])}
        </div>
        ${title("绘图")}
      </div>

      <div class="panel" style="width:144px">
        <div class="body">
          ${grid(361, [375, 402, 427, 454, 478.5, 496.5], [
            ["scale", "move3d", "move", "copy", "trim", "^"],
            ["ell", "rotate3d", "rotate", "stretch", "fillet", "^"],
            ["brush", "triad", "offset", "boundary", "array", "^"],
          ])}
        </div>
        ${title("修改")}
      </div>

      <div class="panel" style="width:62px">
        <div class="body"><div class="large w-sec"><div class="pic">${ic("section", 30, 30)}</div><span>截面<br />平面</span></div></div>
        ${title("截面", true, true)}
      </div>

      <div class="panel" style="width:144px">
        <div class="body">
          <div class="grid" style=${tracks(567, [581, 597, 621, 648, 673, 697])}>
            ${["ucsLamp", "^", "ucsDoc", "ucsPlain", "ucsList", "ucsGlobe", "ucsX", "^", "ucsUndo", "ucsNode", "ucsZ", "ucs3", "ucsFace", "^"].map(cell)}
            <div class="combo world">${ic("ucsGlobe")}<span>世界</span><i class="caret"></i></div>
          </div>
        </div>
        ${title("坐标", false, true)}
      </div>

      <div class="panel" style="width:206px">
        <div class="body">
          <div class="view-col">
            <div class="combo">${ic("shade", 16, 16)}<span>带边缘着色</span><i class="caret"></i></div>
            <div class="combo">${ic("viewDark", 16, 16)}<span>未保存的视图</span><i class="caret"></i></div>
            <div class="view-row">${ic("viewport", 18, 18)}<span>单个视口</span><i class="caret"></i></div>
          </div>
        </div>
        ${title("视图")}
      </div>

      <div class="panel" style="width:169px">
        <div class="body">
          <div class="large w-hide"><div class="pic">${ic("hide", 30, 32)}</div><span>剔除</span></div>
          <div class="large w-filter"><div class="pic">${ic("filterCube", 32, 32)}</div><span>无过滤器</span><i class="caret under"></i></div>
          <div class="large w-gizmo"><div class="pic">${ic("gizmo", 32, 32)}</div><span>移动<br />小控件</span><i class="caret gizmo-more"></i></div>
        </div>
        ${title("选择", false)}
      </div>

      <div class="panel" style="width:253px">
        <div class="body">
          <div class="large w-layer"><div class="pic">${ic("layerProps", 32, 32)}</div><span>图层<br />特性</span></div>
          <div class="layer-col">
            <div class="combo layer">
              <span class="bulb">${ic("bulb")}</span><span class="gap">${ic("sun")}</span><span class="gap">${ic("lockOpen")}</span>
              <span class="swatch"></span><span class="zero">0</span><i class="caret"></i>
            </div>
            ${grid(1129, [1142, 1165, 1189, 1213, 1237], [
              ["layOff", "layIso", "layFreeze", "layLock", "layCur", "p:置为当前"],
              ["layOn", "layUniso", "layThaw", "layUnlock", "layMatch", "p:匹配图层"],
            ], "1fr")}
          </div>
        </div>
        ${title("图层", true, false, true)}
      </div>

      <div class="panel" style="width:68px">
        <div class="body">
          <div class="large w-group"><div class="pic">${ic("group", 32, 32)}</div><span>组</span></div>
          <div class="group-col">
            <div class="slot">${ic("groupEdit")}</div>
            <div class="slot">${ic("groupAdd")}</div>
            <div class="slot on">${ic("groupPick")}</div>
          </div>
        </div>
        ${title("组", true, false, true)}
      </div>

      <div class="panel" style="width:61px">
        <div class="body"><div class="large w-base"><div class="pic">${ic("baseShape", 28, 32)}</div><span>基点</span><i class="caret under"></i></div></div>
        ${title("视图", true, true)}
      </div>
    </div>`;
  }

  private statusGroup(x: number, w: number, centers: number[], cells: unknown[]) {
    return html`<div class="sgroup" style="width:${w}px;${tracks(x + 1, centers)}">${cells}</div>`;
  }

  render() {
    return html`
      <svg class="defs">
        <defs>
          <radialGradient id="ball" cx=".4" cy=".3" r=".85">
            <stop offset="0" stop-color="#fff" /><stop offset=".6" stop-color="#d8d8d8" /><stop offset="1" stop-color="#7c7c7c" />
          </radialGradient>
          <radialGradient id="globe" cx=".4" cy=".35" r=".8">
            <stop offset="0" stop-color="#d8f2f6" /><stop offset=".6" stop-color="#7ec4cc" /><stop offset="1" stop-color="#3d7f94" />
          </radialGradient>
          <linearGradient id="whitegrad" x1="0" y1="0" x2="0" y2="1">
            <stop offset="0" stop-color="#fdfdfd" /><stop offset="1" stop-color="#c4c7cc" />
          </linearGradient>
          <linearGradient id="bluegrad" x1="0" y1="0" x2="0" y2="1">
            <stop offset="0" stop-color="#f0f6fd" /><stop offset="1" stop-color="#aac8ee" />
          </linearGradient>
        </defs>
      </svg>

      <div class="topbar">
        <div class="qat">
          ${ic("printer")}<span class="spacer"></span>${ic("undo")}<i class="caret"></i>${ic("redo")}<i class="caret dim"></i>${ic("qatmore")}
        </div>
        <div class="doc-title"><span>Autodesk AutoCAD 2018</span><span>Drawing1.dwg</span></div>
        <div class="cluster">
          <span class="tri"></span>
          <div class="search">键入关键字或短语</div>
          <span class="bino">${ic("binoculars")}</span>
          <span class="usr">${ic("user")}</span>
          <span class="num">2539031630</span>
          <i class="caret"></i>
          <span class="cart">${ic("cart")}</span>
          <span class="tri360">${ic("a360")}</span>
          <i class="caret sm"></i>
          <span class="sep"></span>
          <span>${ic("help")}</span>
          <i class="caret sm"></i>
        </div>
        <span class="close"></span>
      </div>

      <div class="tabs">
        ${TABS.map((t) => html`<span>${t}</span>`)}
        <span class="switch">${ic("view3d", 16, 16)}<i class="caret"></i></span>
      </div>

      ${this.ribbon()}

      <div class="filetabs">
        <span class="shard"></span>
        <div class="ftab"><span>Drawing1*</span><span class="x">✕</span></div>
        <div class="fplus">+</div>
      </div>
      <div class="strip"></div>

      <div class="canvas">
        ${this.scene()}
        <span class="cube-west">西</span>
        <span class="wcs"></span>
      </div>

      <div class="cmd-edge"></div>
      <div class="cmd"></div>
      <div class="cmd-white"></div>

      <div class="status">
        <div class="ltab"><span>布局2</span></div>
        <div class="lplus">+</div>
        <div class="sgroup model"><span class="txt">模型</span></div>
        ${this.statusGroup(1245, 65, [1258, 1282, 1302], [ic("stGrid"), ic("stSnap"), html`<i class="caret"></i>`])}
        ${this.statusGroup(1311, 103, [1324, 1348, 1368, 1387, 1407], [ic("stOrtho"), ic("stPolar"), html`<i class="caret"></i>`, ic("stIso"), html`<i class="caret"></i>`])}
        ${this.statusGroup(1415, 64, [1427, 1452, 1471], [ic("stAngle"), ic("stBox"), html`<i class="caret"></i>`])}
        ${this.statusGroup(1480, 107, [1493, 1517, 1541, 1564.5, 1578], [ic("stAnnoBlue"), ic("stAnnoGrey"), ic("stAnno"), html`<span class="scale">1:1</span>`, html`<i class="caret"></i>`])}
      </div>
      <div class="foot"></div>

      <div class="ime">
        <div class="ime-in">
          <span>中</span>
          <svg class="ic" viewBox="0 0 16 16"><circle cx="5" cy="4" r="1.8" fill="none" stroke="#f4f48a" stroke-width="1.2"/><path d="M11 9c0 2-1 3-2 4" stroke="#f4f48a" stroke-width="1.6" fill="none"/></svg>
          <svg class="ic" viewBox="0 0 16 16"><path d="M10 2c3 5 0 11-8 10 4 5 13 3 13-4 0-3-2-5-5-6z" fill="#f4f48a"/></svg>
        </div>
      </div>
    `;
  }
}
